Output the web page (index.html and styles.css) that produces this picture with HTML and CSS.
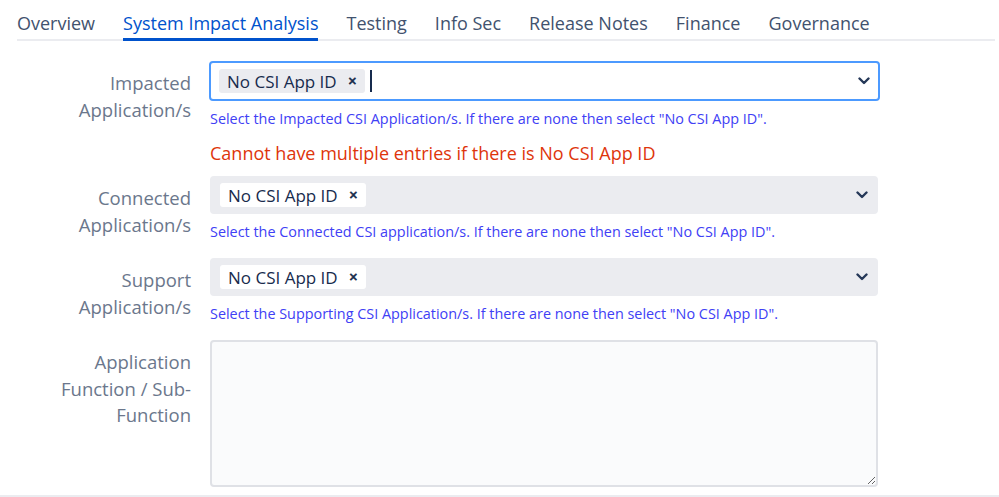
FILE: index.html
```html
<!DOCTYPE html>
<html>
<head>
<meta charset="utf-8">
<link rel="stylesheet" href="styles.css">
</head>
<body>
<div class="page">
  <nav class="tabs">
    <div class="tab">Overview</div>
    <div class="tab active">System Impact Analysis</div>
    <div class="tab">Testing</div>
    <div class="tab">Info Sec</div>
    <div class="tab">Release Notes</div>
    <div class="tab">Finance</div>
    <div class="tab">Governance</div>
  </nav>
  <div class="form">
    <div class="row">
      <div class="label">Impacted<br>Application/s</div>
      <div class="field">
        <div class="select focused">
          <span class="tag">No CSI App ID<span class="x">&#x2715;</span></span>
          <span class="caret"></span>
          <svg class="chev" width="12" height="8" viewBox="0 0 12 8"><path d="M1.5 1.5 L6 6 L10.5 1.5" fill="none" stroke="#253858" stroke-width="2.4" stroke-linecap="round" stroke-linejoin="round"/></svg>
        </div>
        <div class="help">Select the Impacted CSI Application/s. If there are none then select "No CSI App ID".</div>
        <div class="error">Cannot have multiple entries if there is No CSI App ID</div>
      </div>
    </div>
    <div class="row">
      <div class="label">Connected<br>Application/s</div>
      <div class="field">
        <div class="select">
          <span class="tag">No CSI App ID<span class="x">&#x2715;</span></span>
          <svg class="chev" width="12" height="8" viewBox="0 0 12 8"><path d="M1.5 1.5 L6 6 L10.5 1.5" fill="none" stroke="#253858" stroke-width="2.4" stroke-linecap="round" stroke-linejoin="round"/></svg>
        </div>
        <div class="help">Select the Connected CSI application/s. If there are none then select "No CSI App ID".</div>
      </div>
    </div>
    <div class="row">
      <div class="label">Support<br>Application/s</div>
      <div class="field">
        <div class="select">
          <span class="tag">No CSI App ID<span class="x">&#x2715;</span></span>
          <svg class="chev" width="12" height="8" viewBox="0 0 12 8"><path d="M1.5 1.5 L6 6 L10.5 1.5" fill="none" stroke="#253858" stroke-width="2.4" stroke-linecap="round" stroke-linejoin="round"/></svg>
        </div>
        <div class="help">Select the Supporting CSI Application/s. If there are none then select "No CSI App ID".</div>
      </div>
    </div>
    <div class="row">
      <div class="label">Application<br>Function / Sub-<br>Function</div>
      <div class="field">
        <textarea class="textarea"></textarea>
      </div>
    </div>
  </div>
  <div class="bottom-line"></div>
</div>
</body>
</html>
```

FILE: styles.css
```css
html, body {
  margin: 0;
  padding: 0;
  background: #ffffff;
}
body {
  font-family: "Open Sans", "Noto Sans", sans-serif;
  color: #172b4d;
  width: 999px;
  height: 497px;
  overflow: hidden;
}
.page {
  position: relative;
  height: 497px;
}
.tabs {
  display: flex;
  gap: 28px;
  margin: 0 4px 0 17px;
  padding-top: 10px;
  border-bottom: 2px solid #ebecf0;
}
.tab {
  font-size: 18px;
  line-height: 26px;
  color: #42526e;
  padding-bottom: 2px;
  border-bottom: 3px solid transparent;
  margin-bottom: -2px;
}
.tab.active {
  color: #0052cc;
  border-bottom-color: #0052cc;
}
.form {
  display: flex;
  flex-direction: column;
  gap: 18px;
  padding-top: 20px;
}
.row {
  display: grid;
  grid-template-columns: 191px 668px;
  column-gap: 19px;
}
.label {
  text-align: right;
  font-size: 18.5px;
  line-height: 26.5px;
  color: #6b778c;
  padding-top: 9px;
}
.select {
  display: flex;
  align-items: center;
  height: 38px;
  box-sizing: border-box;
  border: 2px solid #ebecf0;
  background: #ebecf0;
  border-radius: 4px;
  padding: 0 8px;
}
.select.focused {
  height: 40px;
  border-color: #4c9aff;
  background: #ffffff;
  margin-left: -1px;
  width: 671px;
}
.tag {
  display: inline-flex;
  align-items: center;
  height: 24px;
  padding: 0 8px 0 8px;
  background: #ffffff;
  border-radius: 3px;
  font-size: 17px;
  color: #172b4d;
}
.select.focused .tag {
  background: #ebecf0;
}
.x {
  font-size: 11px;
  font-weight: 700;
  margin-left: 11px;
  color: #172b4d;
  font-family: "DejaVu Sans", sans-serif;
  -webkit-text-stroke: 0.6px #172b4d;
}
.caret {
  width: 2px;
  height: 22px;
  background: #172b4d;
  margin-left: 5px;
}
.chev {
  margin-left: auto;
  margin-right: 0;
}
.help {
  font-size: 14.4px;
  line-height: 16px;
  color: #4040f5;
  margin-top: 10px;
}
.error {
  font-size: 18px;
  line-height: 22px;
  color: #de350b;
  margin-top: 15px;
  margin-bottom: -6px;
}
.textarea {
  display: block;
  width: 668px;
  height: 147px;
  box-sizing: border-box;
  border: 2px solid #dfe1e6;
  background: #fafbfc;
  border-radius: 4px;
  margin: 0;
  resize: both;
  font-family: inherit;
}
.bottom-line {
  position: absolute;
  left: 0;
  right: 0;
  bottom: 0;
  height: 2px;
  background: #ebecf0;
}
```
